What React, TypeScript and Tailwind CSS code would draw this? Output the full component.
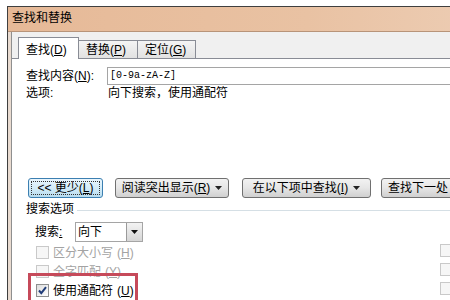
import React from "react";

const btn =
  "h-[20px] flex items-center justify-center rounded-[3px] border border-[#707070] bg-gradient-to-b from-[#f2f2f2] via-[#e6e6e6] to-[#d0d0d0] text-[12px] leading-none text-black shrink-0";

function Arrow() {
  return (
    <svg width="7" height="4" viewBox="0 0 7 4" className="ml-[5px]">
      <path d="M0 0h7L3.5 4z" fill="#222" />
    </svg>
  );
}

function Key({ k }: { k: string }) {
  return (
    <span>
      (<span className="underline underline-offset-1">{k}</span>)
    </span>
  );
}

function Check({
  checked,
  disabled,
}: {
  checked?: boolean;
  disabled?: boolean;
}) {
  return (
    <div
      className={
        disabled
          ? "w-[13px] h-[13px] border border-[#c9c9c9] bg-[#f6f6f6] shrink-0"
          : "w-[13px] h-[13px] border border-[#8e8f8f] bg-gradient-to-br from-[#dcdcdc] to-[#ffffff] shrink-0 flex items-center justify-center"
      }
    >
      {checked && (
        <svg width="9" height="9" viewBox="0 0 9 9">
          <path
            d="M1 4.5l2.3 2.6L8 1.2"
            fill="none"
            stroke="#1f3c78"
            strokeWidth="2"
          />
        </svg>
      )}
    </div>
  );
}

export default function App() {
  return (
    <div className="relative w-[450px] h-[300px] overflow-hidden bg-white pl-[7px] pt-[6px] font-['Liberation_Sans','Noto_Sans_CJK_SC',sans-serif] text-[12px] text-black">
      <div className="w-[600px] h-[400px] flex flex-col border-l border-t border-[#3f3f3f]">
        {/* title bar */}
        <div className="h-[25px] flex items-center pl-[4px] pb-[2px] border-b border-[#b89479] bg-gradient-to-r from-[#e6b997] via-[#e9c2a3] to-[#efd4bf] leading-none">
          查找和替换
        </div>
        <div className="flex flex-1">
          <div className="w-[3px] bg-[#e9dbd0] border-r border-[#8f8f8f] box-content" />
          <div className="flex-1 flex flex-col">
            {/* tab strip */}
            <div className="h-[26px] bg-[#f0f0f0] flex items-end pl-[6px]">
              <div className="relative z-10 -mb-px h-[22px] w-[61px] border border-b-0 border-[#898c95] bg-white pl-[7px] pt-[3px] flex items-center leading-none">
                查找<Key k="D" />
              </div>
              <div className="h-[18px] w-[59px] border border-l-0 border-b-0 border-[#898c95] bg-gradient-to-b from-[#f4f4f4] to-[#e2e2e2] pl-[7px] flex items-center leading-none">
                替换<Key k="P" />
              </div>
              <div className="h-[18px] w-[58px] border border-l-0 border-b-0 border-[#898c95] bg-gradient-to-b from-[#f4f4f4] to-[#e2e2e2] pl-[7px] flex items-center leading-none">
                定位<Key k="G" />
              </div>
            </div>
            {/* panel */}
            <div className="flex-1 bg-white border-t border-[#898c95] pl-[14px] flex flex-col">
              <div className="mt-[8px] h-[18px] flex items-center">
                <div className="w-[81px] leading-none">
                  查找内容<Key k="N" />:
                </div>
                <div className="flex-1 h-[18px] border border-[#a5a5a5] pl-[2px] flex items-center font-['Liberation_Mono',monospace] text-[10px] leading-none">
                  [0-9a-zA-Z]
                </div>
              </div>
              <div className="h-[16px] flex items-center leading-none">
                <div className="w-[82px]">选项:</div>
                <div>向下搜索，使用通配符</div>
              </div>

              {/* buttons */}
              <div className="mt-[77px] flex items-center">
                <div className="ml-[2px] w-[75px] h-[20px] rounded-[3px] border border-[#3c7fb1] bg-gradient-to-b from-[#eaf6fd] via-[#d4ecf8] to-[#b7dcef] p-[2px] shrink-0">
                  <div className="h-full border border-dotted border-[#333] flex items-center justify-center leading-none">
                    &lt;&lt; 更少<Key k="L" />
                  </div>
                </div>
                <div className={btn + " ml-[12px] w-[114px]"}>
                  阅读突出显示<Key k="R" />
                  <Arrow />
                </div>
                <div className={btn + " ml-[13px] w-[129px]"}>
                  在以下项中查找<Key k="I" />
                  <Arrow />
                </div>
                <div className={btn + " ml-[10px] w-[90px] !justify-start pl-[6px]"}>查找下一处</div>
              </div>

              {/* search options */}
              <div className="mt-[3px] h-[16px] flex items-center leading-none">
                <span>搜索选项</span>
                <div className="flex-1 ml-[3px] mt-[2px] border-t border-[#d5dfe5]" />
              </div>
              <div className="mt-[5px] h-[20px] flex items-center">
                <div className="ml-[9px] w-[40px] leading-none">
                  搜索<span className="underline underline-offset-1">:</span>
                </div>
                <div className="w-[68px] h-[20px] border border-[#a5a5a5] flex items-center">
                  <span className="flex-1 pl-[2px] leading-none">向下</span>
                  <div className="w-[16px] h-full border-l border-[#9a9a9a] bg-gradient-to-b from-[#f3f3f3] to-[#d6d6d6] flex items-center justify-center">
                    <svg width="7" height="4" viewBox="0 0 7 4">
                      <path d="M0 0h7L3.5 4z" fill="#111" />
                    </svg>
                  </div>
                </div>
              </div>

              <div className="mt-[1px] flex">
                <div className="ml-[10px] w-[404px] flex flex-col">
                  <div className="h-[19px] flex items-center gap-[4px] text-[#a3a3a3] leading-none">
                    <Check disabled />
                    区分大小写<Key k="H" />
                  </div>
                  <div className="h-[19px] flex items-center gap-[4px] text-[#a3a3a3] leading-none">
                    <Check disabled />
                    全字匹配<Key k="Y" />
                  </div>
                  <div className="h-[19px] flex items-center gap-[4px] leading-none">
                    <Check checked />
                    使用通配符<Key k="U" />
                  </div>
                </div>
                <div className="-mt-[2px] flex flex-col">
                  <div className="h-[19px] flex items-center">
                    <Check disabled />
                  </div>
                  <div className="h-[19px] flex items-center">
                    <Check disabled />
                  </div>
                  <div className="h-[19px] flex items-center">
                    <Check disabled />
                  </div>
                </div>
              </div>
            </div>
          </div>
        </div>
      </div>
      {/* highlight annotation */}
      <div className="absolute left-[28px] top-[273px] w-[110px] h-[40px] border-[3px] border-[#c64a5a]" />
    </div>
  );
}
